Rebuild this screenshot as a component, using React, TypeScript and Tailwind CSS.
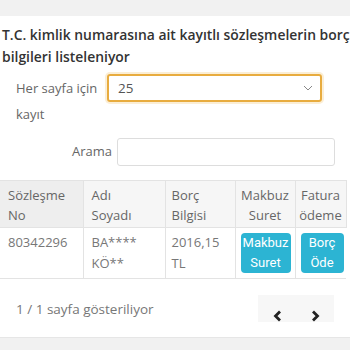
export default function App() {
  return (
    <div className="h-[350px] w-[350px] overflow-hidden bg-white font-['Open_Sans',sans-serif]">
      <div className="h-[16px] bg-[#f1f1f1]"></div>
      <div className="whitespace-nowrap pl-[2px] pt-[8px] text-[13.9px] font-semibold leading-[22px] text-[#333]">
        T.C. kimlik numarasına ait kayıtlı sözleşmelerin borç
        <br />
        bilgileri listeleniyor
      </div>
      <div className="mt-[6px] flex pl-[16px] text-[13px] text-[#666]">
        <div className="w-[91px] pt-[1px] leading-[26px]">Her sayfa için kayıt</div>
        <div className="flex h-[28px] w-[215px] items-center justify-between rounded-[3px] border-2 border-[#e8ac3f] px-[9px] text-[13.5px] text-[#555] shadow-[0_0_0_2px_#fbeed5]">
          <span>25</span>
          <svg width="10" height="6" viewBox="0 0 10 6" className="mr-[-2px]">
            <path d="M1 1l4 4 4-4" fill="none" stroke="#888" strokeWidth="1" />
          </svg>
        </div>
      </div>
      <div className="mt-[11px] flex items-center justify-end pr-[15px] text-[13px] text-[#666]">
        <span className="mr-[5px]">Arama</span>
        <div className="h-[28px] w-[218px] rounded-[3px] border border-[#ddd]"></div>
      </div>
      <table className="mt-[14px] w-[346px] table-fixed border-collapse text-[13px] leading-[20px]">
        <colgroup>
          <col className="w-[83px]" />
          <col className="w-[82px]" />
          <col className="w-[70px]" />
          <col className="w-[60px]" />
          <col className="w-[51px]" />
        </colgroup>
        <thead>
          <tr className="text-left align-top font-normal text-[#666]">
            <th className="border border-l-0 border-[#e3e3e3] bg-[#eeeeee] px-[8px] pb-[2px] pt-[4px] font-normal">
              Sözleşme
              <br />
              No
            </th>
            <th className="border border-[#e3e3e3] bg-[#f6f6f6] px-[8px] pb-[2px] pt-[4px] font-normal">
              Adı
              <br />
              Soyadı
            </th>
            <th className="border border-[#e3e3e3] bg-[#f6f6f6] px-[6px] pb-[2px] pt-[4px] font-normal">
              Borç
              <br />
              Bilgisi
            </th>
            <th className="border border-[#e3e3e3] bg-[#f6f6f6] px-[2px] pb-[2px] pt-[4px] text-center font-normal">
              Makbuz
              <br />
              Suret
            </th>
            <th className="border border-[#e3e3e3] bg-[#f6f6f6] px-[2px] pb-[2px] pt-[4px] text-center font-normal">
              Fatura
              <br />
              ödeme
            </th>
          </tr>
        </thead>
        <tbody>
          <tr className="align-top text-[#777]">
            <td className="border border-l-0 border-[#e3e3e3] px-[8px] pt-[4px]">80342296</td>
            <td className="border border-[#e3e3e3] px-[8px] pt-[4px] leading-[21px]">
              BA****
              <br />
              KÖ**
            </td>
            <td className="border border-[#e3e3e3] px-[6px] pt-[4px] leading-[21px]">
              2016,15
              <br />
              TL
            </td>
            <td className="border border-[#e3e3e3] px-[5px] py-[5px]">
              <div className="flex h-[40px] w-[50px] flex-col items-center justify-center rounded-[4px] bg-[#2cb4d3] font-['Roboto',sans-serif] text-[13px] leading-[20px] text-white">
                <span>Makbuz</span>
                <span>Suret</span>
              </div>
            </td>
            <td className="border border-r-0 border-[#e3e3e3] px-[5px] py-[5px]">
              <div className="flex h-[40px] w-[43px] flex-col items-center justify-center rounded-[4px] bg-[#2cb4d3] font-['Roboto',sans-serif] text-[13px] leading-[20px] text-white">
                <span>Borç</span>
                <span>Öde</span>
              </div>
            </td>
          </tr>
        </tbody>
      </table>
      <div className="mt-[16px] flex items-start justify-between pl-[16px] pr-[16px]">
        <span className="mt-[4px] text-[13.5px] text-[#777]">1 / 1 sayfa gösteriliyor</span>
        <div className="flex h-[27px] w-[76px] items-end justify-around bg-[#f7f7f7]">
          <svg width="11" height="12" viewBox="0 0 11 12">
            <path d="M8 1.5L3.5 6 8 10.5" fill="none" stroke="#222" strokeWidth="2.8" />
          </svg>
          <svg width="11" height="12" viewBox="0 0 11 12">
            <path d="M3 1.5L7.5 6 3 10.5" fill="none" stroke="#222" strokeWidth="2.8" />
          </svg>
        </div>
      </div>
      <div className="mt-[15px] h-[14px] border-t border-[#e6e6e6] bg-[#f1f1f1]"></div>
    </div>
  );
}
